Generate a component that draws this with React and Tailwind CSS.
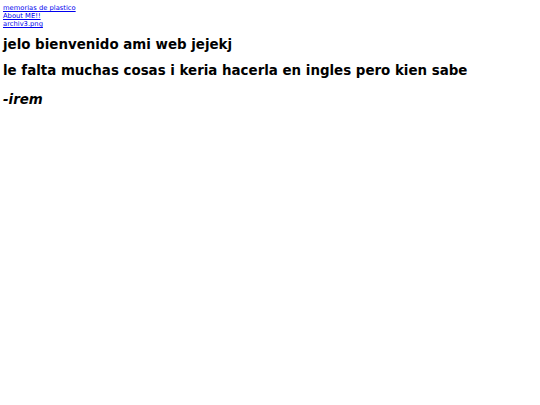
export default function App() {
  return (
    <div className="min-h-[405px] bg-white p-[3px] font-['DejaVu_Sans',sans-serif] text-black">
      <div className="flex flex-col items-start pt-[1px] text-[6.75px] leading-[8px]">
        <a href="#" className="text-[#0000ee] underline">memorias de plastico</a>
        <a href="#" className="text-[#0000ee] underline">About ME!!</a>
        <a href="#" className="text-[#0000ee] underline">archiv3.png</a>
      </div>
      <h1 className="mt-[9px] text-[13.4px] leading-[16px] font-bold">jelo bienvenido ami web jejekj</h1>
      <h1 className="mt-[10px] text-[13.4px] leading-[16px] font-bold">le falta muchas cosas i keria hacerla en ingles pero kien sabe</h1>
      <h1 className="mt-[13px] text-[13.4px] leading-[16px] font-bold italic">-irem</h1>
    </div>
  )
}
